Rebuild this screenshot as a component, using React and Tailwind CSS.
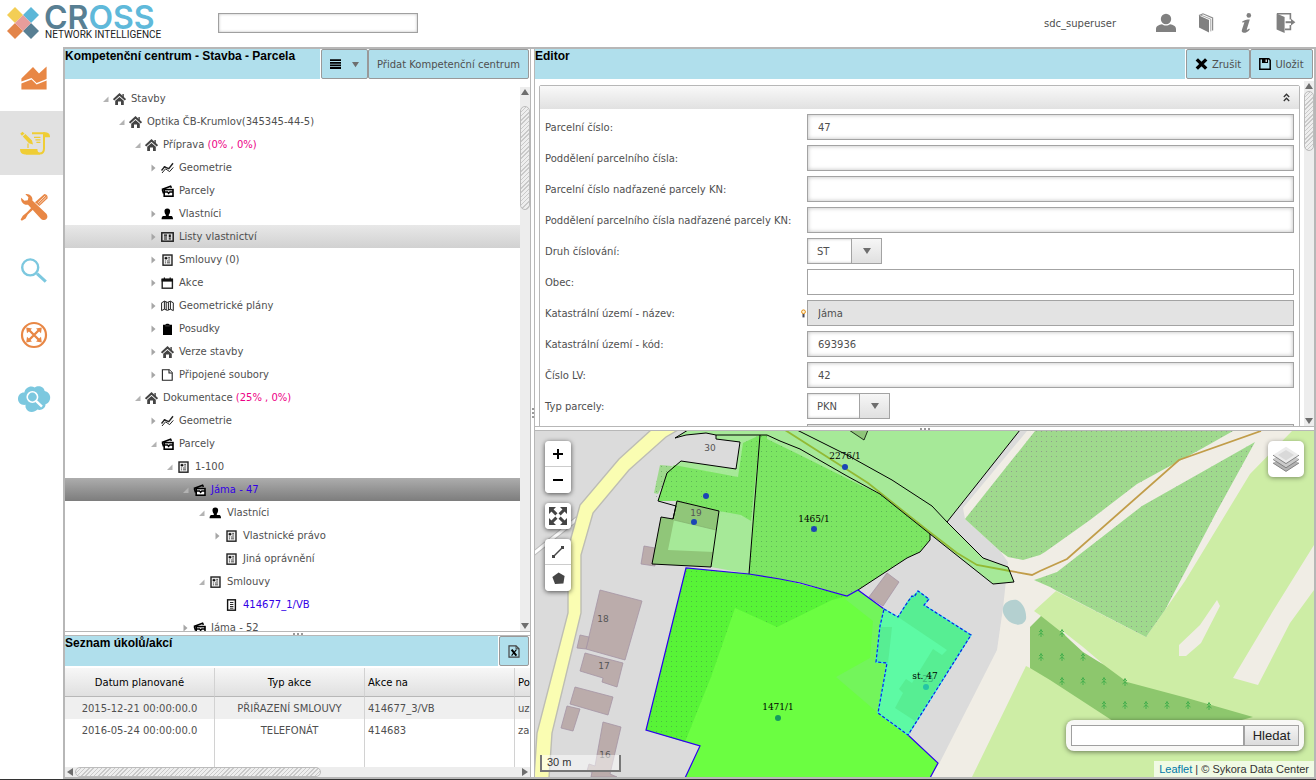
import React, { useState } from 'react';

const UI_FONT = "font-['DejaVu_Sans',Verdana,sans-serif]";
const ARIAL = "font-['Liberation_Sans',Arial,sans-serif]";

/* ---------- small icons used in the tree ---------- */

const HomeIcon = () => (
  <svg width="13" height="12" viewBox="0 0 13 12">
    <path d="M0.6 6.8 L6.5 1.4 L12.4 6.8" fill="none" stroke="#444" strokeWidth="2" />
    <path d="M2.2 7.8 L6.5 4 L10.8 7.8 V12 H8 V8.6 H5 V12 H2.2 Z" fill="#444" />
    <rect x="9.4" y="1" width="1.4" height="3" fill="#444" />
  </svg>
);

const GeometryIcon = () => (
  <svg width="13" height="12" viewBox="0 0 13 12" fill="none" stroke="#222">
    <path d="M0.5 8.5 L3.5 4.8 L7.8 6.6 L12 1.2" strokeWidth="1.4" />
    <path d="M1 11 L4.6 6.8 L8.6 9.6 L12.3 5.4" strokeWidth="1" />
    <circle cx="3.6" cy="5" r="0.9" fill="#222" stroke="none" />
  </svg>
);

const ParcelIcon = () => (
  <svg width="13" height="12" viewBox="0 0 13 12">
    <path d="M0.8 4.6 L9.6 1.2 L10.4 2.8" fill="none" stroke="#000" strokeWidth="1.6" />
    <path d="M1.4 4.8 L2.6 8.6" stroke="#000" strokeWidth="1.6" />
    <rect x="3.2" y="4.6" width="8.8" height="6.6" fill="#fff" stroke="#000" strokeWidth="1.6" />
    <path d="M3.2 7 H6.6 L7.6 8.4 L8.8 7 H12" fill="none" stroke="#000" strokeWidth="1.4" />
  </svg>
);

const OwnerIcon = () => (
  <svg width="13" height="12" viewBox="0 0 13 12">
    <path d="M6.3 0.5 C8.6 0.5 9.2 2 9.1 3.4 C9 5 8.4 6.2 7.8 6.8 V8 H10.6 C11.6 8.4 12 9.6 12 11.2 H0.6 C0.6 9.6 1 8.4 2 8 H4.8 V6.8 C4.2 6.2 3.6 5 3.5 3.4 C3.4 2 4 0.5 6.3 0.5 Z" fill="#000" />
  </svg>
);

const CardIcon = () => (
  <svg width="13" height="12" viewBox="0 0 13 12">
    <rect x="0.8" y="1.8" width="11.4" height="8.4" fill="#ddd" stroke="#222" strokeWidth="1.5" />
    <path d="M3 4.2 H6 M3 6 H6 M3 8 H6" stroke="#111" strokeWidth="1.2" />
    <path d="M8.8 3.6 V6.4 M8.8 7.2 V8.4" stroke="#111" strokeWidth="2" />
  </svg>
);

const ContractIcon = () => (
  <svg width="13" height="12" viewBox="0 0 13 12">
    <rect x="2" y="1" width="9" height="10.2" fill="#eee" stroke="#222" strokeWidth="1.4" />
    <path d="M4 3.4 H6 V5 H4 Z M7.2 3.4 H9 M7.2 5 H9 M4 7 H5 M6 7 H9 M4 8.8 H5 M6 8.8 H9" fill="#111" stroke="#111" strokeWidth="0.7" />
  </svg>
);

const PaperIcon = () => (
  <svg width="13" height="12" viewBox="0 0 13 12">
    <rect x="2.6" y="0.8" width="7.8" height="10.4" fill="#fff" stroke="#111" strokeWidth="1.4" />
    <path d="M5 3.5 H8.4 M5 5.5 H8.4 M5 7.5 H8.4 M5 9.2 H8.4" stroke="#111" strokeWidth="0.9" />
  </svg>
);

const CalendarIcon = () => (
  <svg width="13" height="12" viewBox="0 0 13 12">
    <rect x="1.2" y="2.4" width="10.2" height="8.8" fill="#fff" stroke="#222" strokeWidth="1.4" />
    <rect x="0.6" y="1.6" width="11.4" height="3" fill="#111" />
    <path d="M3.4 0.4 V2.6 M9.2 0.4 V2.6" stroke="#111" strokeWidth="1.2" />
  </svg>
);

const MapIcon = () => (
  <svg width="13" height="12" viewBox="0 0 13 12" fill="#fff" stroke="#222" strokeWidth="1">
    <path d="M0.6 2.8 L3.4 1.2 L6.4 2.4 L9.4 1.2 L12.3 2.8 V10.6 L9.4 9.2 L6.4 10.4 L3.4 9.2 L0.6 10.6 Z" />
    <path d="M3.4 1.2 V9.2 M5.2 2 V10 M7.4 2.2 V10 M9.4 1.2 V9.2" />
  </svg>
);

const ClipboardIcon = () => (
  <svg width="13" height="12" viewBox="0 0 13 12">
    <path d="M2 1.8 H4.4 C4.6 0.4 8.4 0.4 8.6 1.8 H11 V12 H2 Z" fill="#000" />
    <path d="M4.2 2.9 H8.8" stroke="#888" strokeWidth="0.5" />
  </svg>
);

const FileIcon = () => (
  <svg width="13" height="12" viewBox="0 0 13 12" fill="#fff" stroke="#222" strokeWidth="1.1">
    <path d="M1.4 0.7 H8.2 L11.2 3.7 V11.3 H1.4 Z" />
    <path d="M8 0.7 V4 H11.2" />
  </svg>
);

const treeIcons = {
  home: HomeIcon,
  geometry: GeometryIcon,
  parcel: ParcelIcon,
  owner: OwnerIcon,
  card: CardIcon,
  contract: ContractIcon,
  paper: PaperIcon,
  calendar: CalendarIcon,
  map: MapIcon,
  clipboard: ClipboardIcon,
  file: FileIcon,
};

/* ---------- data ---------- */

const treeNodes = [
  { id: 1, level: 0, arrow: 'open', icon: 'home', label: 'Stavby' },
  { id: 2, level: 1, arrow: 'open', icon: 'home', label: 'Optika ČB-Krumlov(345345-44-5)' },
  { id: 3, level: 2, arrow: 'open', icon: 'home', label: 'Příprava', progress: '(0% , 0%)' },
  { id: 4, level: 3, arrow: 'closed', icon: 'geometry', label: 'Geometrie' },
  { id: 5, level: 3, arrow: 'none', icon: 'parcel', label: 'Parcely' },
  { id: 6, level: 3, arrow: 'closed', icon: 'owner', label: 'Vlastníci' },
  { id: 7, level: 3, arrow: 'closed', icon: 'card', label: 'Listy vlastnictví' },
  { id: 8, level: 3, arrow: 'closed', icon: 'contract', label: 'Smlouvy (0)' },
  { id: 9, level: 3, arrow: 'closed', icon: 'calendar', label: 'Akce' },
  { id: 10, level: 3, arrow: 'closed', icon: 'map', label: 'Geometrické plány' },
  { id: 11, level: 3, arrow: 'closed', icon: 'clipboard', label: 'Posudky' },
  { id: 12, level: 3, arrow: 'closed', icon: 'home', label: 'Verze stavby' },
  { id: 13, level: 3, arrow: 'closed', icon: 'file', label: 'Připojené soubory' },
  { id: 14, level: 2, arrow: 'open', icon: 'home', label: 'Dokumentace', progress: '(25% , 0%)' },
  { id: 15, level: 3, arrow: 'closed', icon: 'geometry', label: 'Geometrie' },
  { id: 16, level: 3, arrow: 'open', icon: 'parcel', label: 'Parcely' },
  { id: 17, level: 4, arrow: 'open', icon: 'contract', label: '1-100' },
  { id: 18, level: 5, arrow: 'open', icon: 'parcel', label: 'Jáma - 47', blue: true },
  { id: 19, level: 6, arrow: 'open', icon: 'owner', label: 'Vlastníci' },
  { id: 20, level: 7, arrow: 'closed', icon: 'contract', label: 'Vlastnické právo' },
  { id: 21, level: 7, arrow: 'none', icon: 'contract', label: 'Jiná oprávnění' },
  { id: 22, level: 6, arrow: 'open', icon: 'contract', label: 'Smlouvy' },
  { id: 23, level: 7, arrow: 'none', icon: 'paper', label: '414677_1/VB', blue: true },
  { id: 24, level: 5, arrow: 'closed', icon: 'parcel', label: 'Jáma - 52' },
];

const tasks = [
  { date: '2015-12-21 00:00:00.0', type: 'PŘIŘAZENÍ SMLOUVY', target: '414677_3/VB', note: 'uz' },
  { date: '2016-05-24 00:00:00.0', type: 'TELEFONÁT', target: '414683', note: 'za' },
];

const fields = [
  { id: 'parcela', label: 'Parcelní číslo:', value: '47' },
  { id: 'poddeleni', label: 'Poddělení parcelního čísla:', value: '' },
  { id: 'nadrazena', label: 'Parcelní číslo nadřazené parcely KN:', value: '' },
  { id: 'poddeleni-nadrazena', label: 'Poddělení parcelního čísla nadřazené parcely KN:', value: '' },
  { id: 'druh', label: 'Druh číslování:', value: 'ST', select: 'w-[75px]' },
  { id: 'obec', label: 'Obec:', value: '', flat: true },
  { id: 'ku-nazev', label: 'Katastrální území - název:', value: 'Jáma', disabled: true, hint: true },
  { id: 'ku-kod', label: 'Katastrální území - kód:', value: '693936' },
  { id: 'lv', label: 'Číslo LV:', value: '42' },
  { id: 'typ', label: 'Typ parcely:', value: 'PKN', select: 'w-[83px]' },
  { id: 'dalsi', label: '', value: '', disabled: true },
];

/* ---------- shared pieces ---------- */

const Triangle = ({ dir, size = 8 }) => {
  const d = {
    up: 'M0 7 L4 1 L8 7 Z',
    down: 'M0 1 L8 1 L4 7 Z',
    left: 'M7 0 L1 4 L7 8 Z',
    right: 'M1 0 L7 4 L1 8 Z',
  }[dir];
  return (
    <svg width={size} height={size} viewBox="0 0 8 8" className="shrink-0">
      <path d={d} fill="#6e6e6e" />
    </svg>
  );
};

const HATCH =
  'rounded-full border border-[#bcbcbc] bg-[repeating-linear-gradient(135deg,#c9c9c9_0px,#c9c9c9_1px,#eeeeee_1px,#eeeeee_3px)]';

const VScroll = ({ thumb, offset }) => (
  <div className="flex w-[10px] shrink-0 flex-col items-center justify-between bg-[#ededed] py-px">
    <div className="flex w-full flex-col items-center">
      <Triangle dir="up" />
      <div className={`w-full ${offset} ${thumb} ${HATCH}`} />
    </div>
    <Triangle dir="down" />
  </div>
);

const PanelButton = ({ children, className = '', ...rest }) => (
  <button
    type="button"
    className={`flex h-[30px] items-center justify-center rounded-[2px] border border-[#999] bg-[#b0dfec] text-[10px] text-[#4f4f4f] ${className}`}
    {...rest}
  >
    {children}
  </button>
);

const PanelHeader = ({ title, children }) => (
  <div className="flex h-[30px] shrink-0 bg-white">
    <h2 className={`min-w-0 flex-1 truncate bg-[#b0dfec] text-[12px] leading-[14px] font-bold text-black ${ARIAL}`}>{title}</h2>
    <div className="ml-px flex">{children}</div>
  </div>
);

const HSplitter = () => (
  <div className="flex h-[5px] shrink-0 items-end justify-center gap-[2px] border-y border-[#b7b7b7] bg-white">
    <span className="size-[2px] bg-[#999]" />
    <span className="size-[2px] bg-[#999]" />
    <span className="size-[2px] bg-[#999]" />
  </div>
);

/* ---------- header ---------- */

const Logo = () => (
  <a href="#" className="flex items-start gap-[5px] pt-[6px] pl-[7px]">
    <svg width="32" height="32" viewBox="0 0 32 32" className="mt-px">
      <path d="M8 0 L16 8 L8 16 L0 8 Z" fill="#f3ce55" />
      <path d="M24 0 L32 8 L24 16 L16 8 Z" fill="#5cb7d8" />
      <path d="M8 16 L16 24 L8 32 L0 24 Z" fill="#e3854a" />
      <path d="M24 16 L32 24 L24 32 L16 24 Z" fill="#587f93" />
      <path d="M16 8 L24 16 L16 24 L8 16 Z" fill="#e79d9b" />
    </svg>
    <span className="flex flex-col">
      <span className="font-['Inter','DejaVu_Sans',sans-serif] text-[32px] leading-[23px] font-semibold text-[#5fb9da]">
        <span className="text-[#587f93]">CR</span>OSS
      </span>
      <span className="pl-px font-['Roboto',sans-serif] text-[10px] leading-[12px] text-[#222]">NETWORK INTELLIGENCE</span>
    </span>
  </a>
);

const Header = () => (
  <header className="flex h-[47px] shrink-0 items-start">
    <div className="w-[218px] shrink-0">
      <Logo />
    </div>
    <input
      type="text"
      aria-label="Hledat"
      className="mt-[13px] h-5 w-[200px] border border-[#a0a0a0] bg-white px-1 text-[10px] shadow-[inset_0_0_3px_#bbb]"
    />
    <div className="ml-auto flex h-[46px] items-center pr-5 text-[10px] text-[#4f4f4f]">
      <span className="mr-10">sdc_superuser</span>
      <div className="flex items-center gap-5">
        <button type="button" title="Uživatel">
          <svg width="20" height="20" viewBox="0 0 20 20" fill="#808080">
            <circle cx="10" cy="6" r="5.2" />
            <path d="M0 19 V16 C0 13 3 11.6 6 11.2 C8 13 12 13 14 11.2 C17 11.6 20 13 20 16 V19 Z" />
          </svg>
        </button>
        <button type="button" title="Nápověda">
          <svg width="20" height="20" viewBox="0 0 20 20">
            <path d="M3 2.5 L13 7 V19.5 L3 14.5 Z" fill="#808080" />
            <path d="M3 2.6 L7 0.8 L16.6 5 V17.4" fill="none" stroke="#8d8d8d" strokeWidth="1.2" />
            <path d="M5 2.2 L14.8 6.2 V18.4" fill="none" stroke="#8d8d8d" strokeWidth="0.8" />
          </svg>
        </button>
        <button type="button" title="Informace">
          <svg width="20" height="20" viewBox="0 0 20 20" fill="#808080">
            <circle cx="12.8" cy="2.4" r="2.3" />
            <path d="M6.2 8.6 C8 7 10.6 6.4 13.8 6.4 L10.8 16.2 C10.6 17.2 11.4 17 13.2 15.6 L13.8 16.4 C12 18.8 9.6 20 7.6 19.8 C5.8 19.6 5.4 18.2 6 16.6 L8.4 9.2 L6.2 9.6 Z" />
          </svg>
        </button>
        <button type="button" title="Odhlásit">
          <svg width="20" height="20" viewBox="0 0 20 20">
            <path d="M1 0.8 H14.4 V6.6 M14.4 12 V16.4 H9" fill="none" stroke="#808080" strokeWidth="1.6" />
            <path d="M0.6 0.6 L8.6 4 V20 L0.6 16.6 Z" fill="#808080" />
            <path d="M9.6 9.2 H16" stroke="#808080" strokeWidth="2" />
            <path d="M15 5.8 L19.4 9.2 L15 12.6 Z" fill="#808080" />
          </svg>
        </button>
      </div>
    </div>
  </header>
);

/* ---------- sidebar ---------- */

const modules = [
  {
    id: 'stats',
    title: 'Statistiky',
    icon: (
      <svg width="34" height="34" viewBox="0 0 34 34">
        <path d="M4.4 16.4 L16 5 L22 11.4 L29.6 4.6 V17 L19.6 21 L14.5 16 L4.4 19.6 Z" fill="#e88745" />
        <path d="M4.4 21.4 L14.5 17.6 L19.6 22.4 L29.6 18.6 V27.4 H4.4 Z" fill="#e88745" />
      </svg>
    ),
  },
  {
    id: 'competence',
    title: 'Kompetenční centrum',
    active: true,
    icon: (
      <svg width="34" height="34" viewBox="0 0 34 34">
        <path d="M15 7.2 H28 M27 8 V22.6 C27 26.4 25.4 27.6 22.6 27.6 H9" fill="none" stroke="#efcd35" strokeWidth="2" />
        <path d="M26 6.2 C31 5.8 33.2 7.6 33 11.2 H27 Z" fill="#efcd35" />
        <path d="M3 23 H20.4 C20.4 25.2 21.2 26.6 23 27.2 V28.4 H8 C4.6 28.4 3 26.6 3 23 Z" fill="#efcd35" />
        <path d="M17 11.4 H23.4 M18.4 13.9 H23.4 M19.4 16.4 H23.4" stroke="#efcd35" strokeWidth="1.4" />
        <path d="M3.2 7.8 L5.4 5.8 L7.6 7.4 L5 9.8 Z M5.8 10.6 L8.4 8 L15 14.4 L16 18.6 L12 17.2 Z" fill="#efcd35" />
        <path d="M11 17.4 V22" stroke="#efcd35" strokeWidth="1.2" />
      </svg>
    ),
  },
  {
    id: 'tools',
    title: 'Nástroje',
    icon: (
      <svg width="34" height="34" viewBox="0 0 34 34" fill="#e88745">
        <path d="M4.2 7.8 C3.4 11.4 6.4 15.4 11 14.8 L23.6 28.4 C26 31 30.4 30.2 30.4 26.8 C30.4 25.2 29.8 24 28.6 23 L15.4 10.6 C16 7 12.8 3.4 8.4 4.2 L11.4 7.2 L10.8 10.2 L7.4 10.8 Z" />
        <path d="M27.4 4 C29.8 4.2 31.2 6.4 30.4 8.4 L22.4 16 L18 12.2 Z" />
        <path d="M28.2 5.8 L20.8 13 M29.4 7.2 L22.2 14.2" stroke="#fff" strokeWidth="0.7" />
        <path d="M14.6 17.6 L16.2 19.4 L10.8 24.4 L8.6 28.6 L4.8 30.8 L3.6 29.4 L5.8 25.8 L9.8 22.6 Z" />
      </svg>
    ),
  },
  {
    id: 'search',
    title: 'Vyhledávání',
    icon: (
      <svg width="34" height="34" viewBox="0 0 34 34" fill="none" stroke="#7cc8df">
        <circle cx="13.2" cy="13.4" r="8" strokeWidth="2.4" />
        <path d="M20 19.6 L28.8 27.6" strokeWidth="3" />
      </svg>
    ),
  },
  {
    id: 'network',
    title: 'Síť',
    icon: (
      <svg width="34" height="34" viewBox="0 0 34 34">
        <circle cx="17" cy="17" r="12" fill="none" stroke="#e88745" strokeWidth="2.2" />
        <path d="M11 11 L23 23 M23 11 L11 23" stroke="#e88745" strokeWidth="2.4" />
        <path d="M9.2 9.6 L15 10.4 L10 15.2 Z M24.8 9.6 L24 15.2 L19 10.4 Z M9.2 24.4 L10 18.8 L15 23.6 Z M24.8 24.4 L19 23.6 L24 18.8 Z" fill="#e88745" />
      </svg>
    ),
  },
  {
    id: 'cloud',
    title: 'Cloud',
    icon: (
      <svg width="34" height="34" viewBox="0 0 34 34">
        <path d="M7.4 10.6 C8 5.6 14 3 17.6 5.6 C21 3 27 4.4 27.6 9 C31.6 9.6 34 13.6 33 17.2 C32.4 20.4 30 22 28.6 22 C28.6 26.4 24 29 20.4 27.6 C17 31 10.4 31 8.6 25.4 C8.4 24.2 8.4 23.4 8.6 22.8 C4 23.4 1 20.6 1 17 C1 13 3.8 10.4 7.4 10.6 Z" fill="#7cc8df" />
        <circle cx="15.4" cy="15" r="5.2" fill="none" stroke="#fff" strokeWidth="1.6" />
        <path d="M19 18.8 L25 24.6" stroke="#fff" strokeWidth="2.4" />
      </svg>
    ),
  },
];

const Sidebar = () => (
  <nav className="flex w-[63px] shrink-0 flex-col">
    {modules.map((m) => (
      <button
        key={m.id}
        type="button"
        title={m.title}
        className={`flex h-16 w-full items-center justify-center pl-1 ${m.active ? 'bg-[#e1e1e1]' : 'bg-white'}`}
      >
        {m.icon}
      </button>
    ))}
  </nav>
);

/* ---------- tree panel ---------- */

const TreeRow = ({ node, selected, onSelect }) => {
  const Icon = treeIcons[node.icon];
  let bg = '';
  if (selected) bg = 'bg-linear-to-b from-[#adadad] to-[#7d7d7d]';
  else if (node.id === 7) bg = 'bg-linear-to-b from-[#e8e8e8] to-[#d1d1d1]';

  return (
    <li
      role="treeitem"
      aria-selected={selected}
      onClick={() => onSelect(node.id)}
      className={`flex h-[23px] cursor-pointer items-center text-[10px] ${bg}`}
      style={{ paddingLeft: 37 + node.level * 16 }}
    >
      <span className="flex w-[11px] shrink-0">
        {node.arrow === 'open' && (
          <svg width="7" height="8" viewBox="0 0 7 8"><path d="M6.5 1.5 V7 H1 Z" fill="#b3b3b3" /></svg>
        )}
        {node.arrow === 'closed' && (
          <svg width="7" height="8" viewBox="0 0 7 8"><path d="M1.5 0.5 L5.5 4 L1.5 7.5 Z" fill="#a6a6a6" /></svg>
        )}
      </span>
      <span className="w-[18px] shrink-0"><Icon /></span>
      <span className={`whitespace-pre ${node.blue ? 'text-[#3300e6]' : 'text-[#4f4f4f]'}`}>
        {node.label}
        {node.progress && <span className="text-[#ed0086]"> {node.progress}</span>}
      </span>
    </li>
  );
};

const TreePanel = () => {
  const [selectedId, setSelectedId] = useState(18);
  return (
    <section className="flex min-h-0 flex-1 flex-col">
      <PanelHeader title="Kompetenční centrum - Stavba - Parcela">
        <PanelButton className="w-[47px] gap-[10px]" aria-label="Menu">
          <svg width="12" height="10" viewBox="0 0 12 10"><path d="M0 1.2 H11 M0 3.8 H11 M0 6.4 H11 M0 9 H11" stroke="#000" strokeWidth="1.8" /></svg>
          <Triangle dir="down" size={7} />
        </PanelButton>
        <PanelButton className="mr-px px-2">Přidat Kompetenční centrum</PanelButton>
      </PanelHeader>
      <div className="mt-2 flex min-h-0 flex-1 overflow-hidden">
        <ul role="tree" className="min-w-0 flex-1">
          {treeNodes.map((node) => (
            <TreeRow key={node.id} node={node} selected={node.id === selectedId} onSelect={setSelectedId} />
          ))}
        </ul>
        <VScroll thumb="h-[104px]" offset="mt-[10px]" />
      </div>
    </section>
  );
};

/* ---------- tasks table ---------- */

const TaskPanel = () => (
  <section className="flex h-[141px] shrink-0 flex-col">
    <PanelHeader title="Seznam úkolů/akcí">
      <PanelButton className="mr-px w-[30px]" aria-label="Export do Excelu">
        <svg width="12" height="13" viewBox="0 0 12 13">
          <path d="M1 0.8 H8 L11 3.8 V12.2 H1 Z" fill="none" stroke="#444" strokeWidth="1.2" />
          <path d="M8 0.8 V3.8 H11" fill="none" stroke="#444" />
          <path d="M3.6 4.6 L8.4 10.6" stroke="#000" strokeWidth="2" />
          <path d="M8.4 4.6 L3.6 10.6" stroke="#000" strokeWidth="1.1" />
        </svg>
      </PanelButton>
    </PanelHeader>
    <div className="mt-[2px] min-h-0 flex-1 overflow-hidden">
      <table className="h-full w-[600px] table-fixed border-separate border-spacing-0 text-[10px]">
        <thead>
          <tr className="h-[29px] bg-linear-to-b from-[#f7f7f7] to-[#dfdfdf] text-black">
            <th className="border-r border-b border-r-[#d2d2d2] border-b-[#b7b7b7] font-normal">Datum planované</th>
            <th className="border-r border-b border-r-[#d2d2d2] border-b-[#b7b7b7] font-normal">Typ akce</th>
            <th className="border-r border-b border-r-[#d2d2d2] border-b-[#b7b7b7] pl-[3px] text-left font-normal">Akce na</th>
            <th className="border-b border-b-[#b7b7b7] pl-[3px] text-left font-normal">Po</th>
          </tr>
        </thead>
        <tbody>
          {tasks.map((t) => (
            <tr key={t.date} className="h-[22px] text-[#4f4f4f] odd:bg-[#efefef]">
              <td className="border-r border-[#d2d2d2] text-center">{t.date}</td>
              <td className="border-r border-[#d2d2d2] text-center">{t.type}</td>
              <td className="border-r border-[#d2d2d2] pl-[3px]">{t.target}</td>
              <td className="pl-[3px]">{t.note}</td>
            </tr>
          ))}
          <tr className="bg-white">
            <td className="border-r border-[#d2d2d2]" />
            <td className="border-r border-[#d2d2d2]" />
            <td className="border-r border-[#d2d2d2]" />
            <td />
          </tr>
        </tbody>
      </table>
    </div>
    <div className="flex h-[10px] shrink-0 items-center justify-between bg-[#ededed] px-px">
      <div className="flex h-full items-center gap-px">
        <Triangle dir="left" />
        <div className={`h-full w-[246px] ${HATCH}`} />
      </div>
      <Triangle dir="right" />
    </div>
  </section>
);

/* ---------- editor ---------- */

const FieldControl = ({ field }) => {
  if (field.select) {
    return (
      <div className={`relative h-[26px] ${field.select}`}>
        <select
          id={field.id}
          defaultValue={field.value}
          className="block h-full w-full appearance-none border border-[#a3a3a3] bg-white px-[9px] text-[10px] text-[#4f4f4f] shadow-[inset_0_0_3px_#bbb]"
        >
          <option value={field.value}>{field.value}</option>
        </select>
        <span className="pointer-events-none absolute inset-y-0 right-0 flex w-[31px] items-center justify-center border border-[#a3a3a3] bg-linear-to-b from-[#f6f6f6] to-[#e0e0e0]">
          <Triangle dir="down" />
        </span>
      </div>
    );
  }
  let look = 'bg-white shadow-[inset_0_0_4px_#bbb]';
  if (field.flat) look = 'bg-white';
  if (field.disabled) look = 'bg-[#e3e3e3]';
  return (
    <input
      id={field.id}
      type="text"
      defaultValue={field.value}
      readOnly={field.disabled}
      aria-label={field.label || 'Další údaj'}
      className={`block h-[26px] w-full border border-[#a3a3a3] px-[10px] text-[10px] text-[#4f4f4f] ${look}`}
    />
  );
};

const EditorPanel = () => (
  <section className="flex shrink-0 basis-[377px] flex-col overflow-hidden">
    <PanelHeader title="Editor">
      <PanelButton className="w-16 gap-1">
        <svg width="13" height="12" viewBox="0 0 13 12"><path d="M1.8 1.4 L11.2 10.6 M11.2 1.4 L1.8 10.6" stroke="#000" strokeWidth="3.4" /></svg>
        Zrušit
      </PanelButton>
      <PanelButton className="mr-px w-[63px] gap-1">
        <svg width="12" height="12" viewBox="0 0 12 12">
          <path d="M0.8 0.8 H9.8 L11.2 2.2 V11.2 H0.8 Z" fill="#b0dfec" stroke="#000" strokeWidth="1.5" />
          <path d="M3 0.8 H9 V5 H3 Z" fill="#000" />
          <path d="M6.6 1.6 H7.8 V4 H6.6 Z" fill="#fff" />
        </svg>
        Uložit
      </PanelButton>
    </PanelHeader>
    <div className="mt-[2px] flex min-h-0 flex-1 overflow-hidden">
      <div className="mt-1 mr-1 ml-1 min-w-0 flex-1 self-start rounded-t-[2px] border border-[#b7b7b7]">
        <div className="flex h-[23px] items-center justify-end bg-linear-to-b from-[#f9f9f9] to-[#e1e1e1] pr-[9px]">
          <button type="button" aria-label="Sbalit">
            <svg width="7" height="9" viewBox="0 0 7 9" fill="none" stroke="#333" strokeWidth="1.3">
              <path d="M0.8 4 L3.5 1.2 L6.2 4 M0.8 8 L3.5 5.2 L6.2 8" />
            </svg>
          </button>
        </div>
        <div className="flex flex-col gap-[5px] px-[5px] py-[5px]">
          {fields.map((field) => (
            <div key={field.id} className="flex h-[26px]">
              <label htmlFor={field.id} className="flex w-[262px] shrink-0 items-center justify-between pr-px text-[10px] leading-[15px] text-[#4f4f4f]">
                {field.label}
                {field.hint && (
                  <svg width="5" height="9" viewBox="0 0 5 9">
                    <circle cx="2.5" cy="2.8" r="1.9" fill="#fff4d8" stroke="#e08a10" />
                    <rect x="1.5" y="5" width="2" height="3.4" fill="#4a4a5a" />
                  </svg>
                )}
              </label>
              <div className="min-w-0 flex-1">
                <FieldControl field={field} />
              </div>
            </div>
          ))}
        </div>
      </div>
      <VScroll thumb="h-[60px]" offset="mt-px" />
    </div>
  </section>
);

/* ---------- map ---------- */

const buildings = [
  '600,590 642,601 625,660 586,649',
  '580,635 589,637 586,649 577,648',
  '585,653 623,663 617,687 602,682 603,678 580,671',
  '575,687 613,697 608,715 570,704',
  '567,706 580,709 573,731 561,728',
  '603,722 621,727 610,774 617,777 591,777 592,772 587,771 589,764 595,766',
  '644,546 655,548 655,566 641,564',
  '887,573 899,582 883,606 869,597',
];

const trees = [
  [1041, 633], [1062, 633],
  [1041, 657], [1062, 657], [1083, 657],
  [1062, 681], [1083, 681], [1104, 681], [1125, 682],
  [1104, 705], [1125, 705], [1146, 705], [1167, 705], [1188, 705], [1209, 706],
];

const houseNumbers = [
  ['30', 710, 451], ['19', 696, 516], ['18', 603, 622], ['17', 604, 669], ['16', 605, 758], ['25', 928, 682],
];

const parcels = [
  { label: '2276/1', x: 845, y: 460, cx: 845, cy: 467, dot: '#1b45b5' },
  { label: '1465/1', x: 814, y: 523, cx: 814, cy: 529, dot: '#1b45b5' },
  { label: '1471/1', x: 778, y: 711, cx: 778, cy: 718, dot: '#149b5f' },
  { label: 'st. 47', x: 925, y: 680, cx: 926, cy: 687, dot: '#25c4a5' },
];

const PARCEL_47 =
  '884,609 898,617 905,606 912,596 914,597 918,591 929,599 924,605 971,635 908,735 878,713 887,663 876,662 880,626';
const PARCEL_1465 =
  '760,435 767,435 780,441 800,449 847,476 880,494 930,534 930,540 920,552 907,558 858,590 847,596 800,583 780,579 749,574';
const PARCEL_1471 =
  '686,568 749,574 780,579 847,596 858,590 884,609 880,626 876,662 887,663 878,713 908,735 938,763 930,778 685,778 700,746 646,730';

const MapCanvas = () => (
  <svg className="absolute inset-0 h-full w-full" viewBox="535 431 779 346" preserveAspectRatio="xMidYMid slice">
    <defs>
      <pattern id="dots" width="5" height="5" patternUnits="userSpaceOnUse">
        <rect x="1" y="1" width="1" height="1" fill="#8a8f8a" fillOpacity="0.75" />
      </pattern>
      <pattern id="dots-soft" width="5" height="5" patternUnits="userSpaceOnUse">
        <rect x="1" y="1" width="1" height="1" fill="#3f7f4a" fillOpacity="0.45" />
      </pattern>
    </defs>

    {/* ground */}
    <rect x="535" y="431" width="779" height="346" fill="#dbdbdb" />
    <path d="M1027 431 L963 508 L965 519 L1000 551 L1008 562 L1003 608 L997 650 L940 762 L930 777 H1314 V431 Z" fill="#f0ede5" />
    <path d="M1292 431 L1250 474 L1185 581 L1165 610 L1146 637 L1056 591 L1034 611 L1041 616 L1030 668 L1026 666 L972 777 H1314 V431 Z" fill="#cdeda5" />
    <path d="M1314 545 L1273 611 L1233 678 L1258 685 L1290 623 L1314 590 Z M1217 600 L1220 606 L1201 643 L1186 656 H1179 V645 L1200 625 Z" fill="#f0ede5" />
    {['M1035 431 L965 519 L1000 551 L1008 557 L1023 560 L1040 555 L1045 552 L1090 520 L1137 484 L1170 466 L1203 448 L1233 431 Z',
      'M1255 442 L1142 506 L1057 572 L1040 578 L1034 580 L1050 587 L1057 591 L1146 637 L1165 610 L1217 511 Z'].map((d) => (
      <g key={d}>
        <path d={d} fill="#9fd98d" />
        <path d={d} fill="url(#dots)" />
      </g>
    ))}
    <path d="M1060 629 L1083 647 L1103 664 L1083 655 Z" fill="#f0ede5" />
    <path d="M1041 616 L1030 627 V668 L1050 680 L1113 721 L1128 731 H1200 L1253 717 L1187 698 L1127 682 L1104 665 L1083 652 L1060 631 Z" fill="#8dc76d" />
    {trees.map(([x, y]) => (
      <path key={`${x}-${y}`} d={`M${x} ${y - 4} V${y + 4} M${x - 2} ${y - 1} L${x} ${y - 3} L${x + 2} ${y - 1} M${x - 2.5} ${y + 2} L${x} ${y} L${x + 2.5} ${y + 2}`} stroke="#3fae4b" strokeWidth="0.9" fill="none" />
    ))}
    <path d="M1003 608 C1004 602 1011 599 1017 600 C1022 602 1027 610 1026 619 C1023 627 1015 625 1010 622 C1005 618 1002 613 1003 608 Z" fill="#b4d0d0" />
    <path d="M1261 431 L1179 460 L1067 559 L1040 571 L1032 575 L977 565" fill="none" stroke="#c19d49" strokeWidth="1.8" />

    {/* roads */}
    <path d="M533 554 L578 518" stroke="#bbb" strokeWidth="5" />
    <path d="M533 554 L578 518" stroke="#fff" strokeWidth="3" />
    <path d="M651 430 L619 459 L580 505 L571 538 L568 561 V613 L537 733 L534 778 H549 L552 733 L581 613 V555 L593 513 L629 470 L666 437 L678 430 Z" fill="#fafdb2" stroke="#bdbdb4" strokeWidth="1.4" />
    {buildings.map((points) => (
      <polygon key={points} points={points} fill="#bbacab" stroke="#a594a4" strokeWidth="0.8" />
    ))}

    {/* parcel 2276/1 and its neighbours */}
    <path d="M675 438 L688 430 H1020 L947 522 L983 558 L1008 567 L1014 582 L993 584 L930 534 L880 494 L847 476 L800 449 L780 441 L767 435 L760 435 L749 574 L711 567 L719 511 L676 501 L658 501 L667 473 L681 461 L736 469 L740 442 L716 439 V435 L706 433 L686 435 Z" fill="#a6e998" />
    <path d="M785 430 L868 483 L927 530 L957 553 L977 565 L1010 571" fill="none" stroke="#92ba34" strokeWidth="1.8" />
    <path d="M660 465 L672 466 L658 494 L654 493 Z" fill="#9fd98d" />
    <path d="M743 443 L760 435 L751 521 L741 515 L719 511 L676 501 L658 501 L667 473 L674 465 L738 477 Z" fill="#7ce563" />
    <path d="M743 443 L760 435 L751 521 L741 515 L719 511 L676 501 L658 501 L654 493 L660 465 L738 477 Z" fill="url(#dots-soft)" />
    <path d="M676 501 L719 511 L711 567 L652 564 L661 517 L673 519 Z" fill="#90c679" />
    <path d="M674 520 L716 530 L714 552 L668 550 Z" fill="#a6e998" />
    <path d="M674 520 L716 530" stroke="#82b06e" strokeWidth="0.7" />
    <path d="M849 430 L864 440 L868 430 Z" fill="#8fc57a" stroke="#000" strokeWidth="0.8" />

    <polygon points={PARCEL_1465} fill="#7ce563" />
    <polygon points={PARCEL_1465} fill="url(#dots-soft)" />
    <path d="M767 435 L800 449 L847 476 L880 494 L862 486 L800 455 L767 439 Z" fill="#a6e998" />

    {/* parcel 1471/1 */}
    <polygon points={PARCEL_1471} fill="#6bfe41" />
    <path d="M686 568 L749 574 L780 579 L847 596 L832 600 L777 627 L735 608 L711 677 L685 742 L646 730 Z" fill="#58f437" />
    <path d="M686 568 L749 574 L780 579 L847 596 L832 600 L777 627 L735 608 L711 677 L685 742 L646 730 Z" fill="url(#dots-soft)" />
    <path d="M845 599 L858 590 L884 609 L880 626 L876 662 L887 663 L878 713 L836 677 L870 658 L873 621 Z" fill="#73f55b" />

    {/* outlines */}
    <g fill="none" stroke="#000" strokeWidth="1">
      <path d="M688 430 L675 438 L686 435 L706 433 L716 435 H760 L767 435 L780 441 L800 449 L847 476 L880 494 L930 534 L993 584 L1014 582 L1008 567 L983 558 L947 522 L932 506 L892 480 L847 455 L823 443 L797 430" />
      <path d="M716 435 V439 L740 442 L736 469 L681 461 L667 473 L658 501 L676 506 L673 519 L661 517 L652 564 L711 567 L719 511 L677 501 L673 519" />
      <path d="M760 435 L749 574 M947 522 L1020 430 M930 534 V540 L920 552 L907 558 L858 590" />
    </g>
    <path d="M884 609 L858 590 L847 596 L800 583 L780 579 L749 574 L686 568 L646 730 L700 746 L685 778 M908 735 L938 763 L930 778" fill="none" stroke="#2b00ee" strokeWidth="1.2" />

    {/* highlighted parcel */}
    <polygon points={PARCEL_47} fill="#5dfaa4" />
    <path d="M898 617 L908 600 L912 596 L918 591 L929 599 L924 605 L971 635 L915 721 L895 708 L903 693 L899 689 L906 679 L912 683 L933 649 L942 655 L947 650 Z M880 627 H892 L888 663 L876 662 Z" fill="#57ee93" />
    <polygon points={PARCEL_47} fill="none" stroke="#2fe8f5" strokeWidth="1.3" />
    <polygon points={PARCEL_47} fill="none" stroke="#1520d8" strokeWidth="1.2" strokeDasharray="3 2" />

    <g className="font-['DejaVu_Sans',sans-serif] text-[9px]" textAnchor="middle">
      {houseNumbers.map(([n, x, y]) => (
        <text key={n} x={x} y={y} fill={n === '25' ? '#3dbb7c' : '#555'}>{n}</text>
      ))}
    </g>
    <circle cx="706" cy="496" r="3" fill="#1b45b5" />
    <circle cx="694" cy="522" r="3" fill="#1b45b5" />
    <g className="font-['DejaVu_Serif_Condensed','DejaVu_Serif',serif] text-[10px]" textAnchor="middle">
      {parcels.map((p) => (
        <g key={p.label}>
          <circle cx={p.cx} cy={p.cy} r="3" fill={p.dot} />
          <text x={p.x} y={p.y - 1} fill="#000">{p.label}</text>
        </g>
      ))}
    </g>
  </svg>
);

const mapButton = 'flex h-[26px] w-[26px] items-center justify-center bg-white';
const mapGroup = 'flex flex-col divide-y divide-[#ccc] overflow-hidden rounded shadow-[0_1px_5px_rgba(0,0,0,0.65)]';

const MapPanel = () => (
  <section className={`relative min-h-0 flex-1 overflow-hidden ${ARIAL}`}>
    <MapCanvas />
    <div className="absolute top-[10px] left-[10px] flex flex-col gap-[10px]">
      <div className={mapGroup}>
        <button type="button" aria-label="Přiblížit" className={mapButton}>
          <svg width="10" height="10" viewBox="0 0 10 10"><path d="M0 5 H10 M5 0 V10" stroke="#000" strokeWidth="2" /></svg>
        </button>
        <button type="button" aria-label="Oddálit" className={mapButton}>
          <svg width="10" height="10" viewBox="0 0 10 10"><path d="M0 5 H10" stroke="#000" strokeWidth="2" /></svg>
        </button>
      </div>
      <div className={mapGroup}>
        <button type="button" aria-label="Celá obrazovka" className={mapButton}>
          <svg width="18" height="18" viewBox="0 0 18 18">
            <path d="M2 2 L7.4 7.4 M16 2 L10.6 7.4 M2 16 L7.4 10.6 M16 16 L10.6 10.6" stroke="#444" strokeWidth="3" />
            <path d="M0 0 H7 L0 7 Z M18 0 V7 L11 0 Z M0 18 V11 L7 18 Z M18 18 H11 L18 11 Z" fill="#444" />
          </svg>
        </button>
      </div>
      <div className={mapGroup}>
        <button type="button" aria-label="Kreslit linii" className={mapButton}>
          <svg width="12" height="12" viewBox="0 0 12 12">
            <path d="M1.5 10.5 L10.5 1.5" stroke="#464646" strokeWidth="1.4" />
            <path d="M0 9 H3 V12 H0 Z M9 0 H12 V3 H9 Z" fill="#464646" />
          </svg>
        </button>
        <button type="button" aria-label="Kreslit polygon" className={mapButton}>
          <svg width="13" height="13" viewBox="0 0 13 13"><path d="M6.6 0.4 L12.6 4 L11.4 11.4 L3 12 L0.4 5 Z" fill="#464646" /></svg>
        </button>
      </div>
    </div>

    <button
      type="button"
      aria-label="Vrstvy"
      className="absolute top-[10px] right-[10px] flex size-9 items-center justify-center rounded-[5px] bg-white shadow-[0_1px_5px_rgba(0,0,0,0.4)]"
    >
      <svg width="26" height="26" viewBox="0 0 26 26">
        <path d="M0 17 L13 9 L26 17 L13 25.4 Z" fill="#b3b3b3" />
        <path d="M0 17 L13 25.4 L26 17" fill="none" stroke="#7c7c7c" strokeWidth="0.9" />
        <path d="M0 13 L13 5 L26 13 L13 21.4 Z" fill="#cacaca" />
        <path d="M0 13.4 L13 21.8 L26 13.4" fill="none" stroke="#7c7c7c" strokeWidth="0.9" />
        <path d="M0 9 L13 0.8 L26 9 L13 17.4 Z" fill="#ececec" />
        <path d="M5 9 L13 4 L21 9 L13 14.4 Z" fill="#d9d9d9" />
        <path d="M0 9.2 L13 17.6 L26 9.2" fill="none" stroke="#7c7c7c" strokeWidth="0.9" />
      </svg>
    </button>

    <div className="absolute bottom-[5px] left-[5px] w-[81px] border-2 border-t-0 border-[#777] bg-white/50 px-[5px] text-[11px] leading-[15px] text-[#333]">
      30 m
    </div>

    <form
      onSubmit={(e) => e.preventDefault()}
      className="absolute right-[10px] bottom-[26px] flex rounded-lg bg-[#f8f8f6] p-[5px] shadow-[0_1px_5px_rgba(0,0,0,0.5)]"
    >
      <input type="text" aria-label="Hledat v mapě" className="h-[21px] w-[173px] border border-[#a0a0a0] bg-white px-1 text-[13px]" />
      <button type="submit" className="h-[21px] w-[55px] border border-[#a3a3a3] bg-linear-to-b from-[#f4f4f4] to-[#dcdcdc] text-[13px] leading-[18px] text-[#222]">
        Hledat
      </button>
    </form>

    <div className="absolute right-0 bottom-0 bg-white/70 px-[5px] text-[11px] leading-4 text-[#333]">
      <a href="#" className="text-[#0078a8]">Leaflet</a> | © Sykora Data Center
    </div>
  </section>
);

/* ---------- page ---------- */

const App = () => (
  <div className={`flex h-screen flex-col overflow-hidden border-b border-[#333] bg-white ${UI_FONT}`}>
    <Header />
    <div className="flex min-h-0 flex-1">
      <Sidebar />
      <main className="flex min-w-0 flex-1 border-2 border-[#b7b7b7]">
        <div className="flex w-[465px] shrink-0 flex-col overflow-hidden">
          <TreePanel />
          <HSplitter />
          <TaskPanel />
        </div>
        <div className="flex w-[5px] shrink-0 flex-col items-center justify-center gap-[2px] border-x border-[#b7b7b7] bg-white">
          <span className="size-[2px] bg-[#999]" />
          <span className="size-[2px] bg-[#999]" />
          <span className="size-[2px] bg-[#999]" />
        </div>
        <div className="flex min-w-0 flex-1 flex-col">
          <EditorPanel />
          <HSplitter />
          <MapPanel />
        </div>
      </main>
    </div>
  </div>
);

export default App;
